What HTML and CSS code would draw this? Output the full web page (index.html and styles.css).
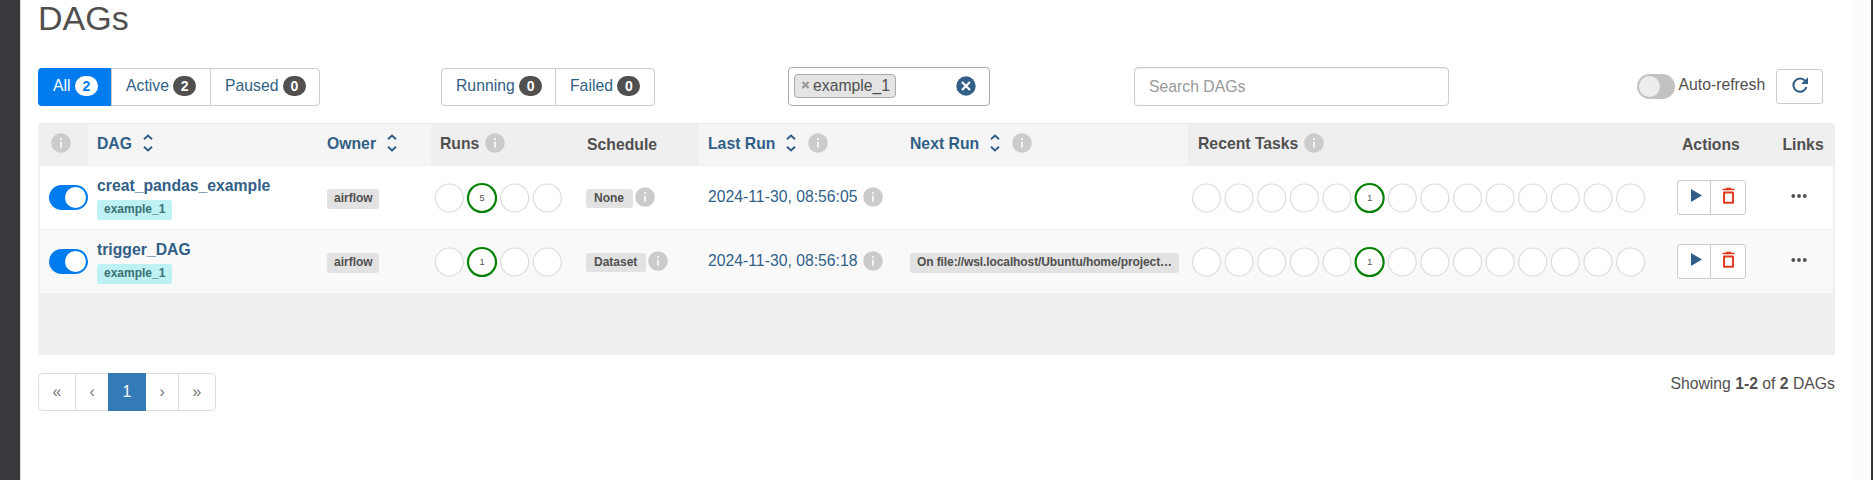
FILE: index.html
```html
<!DOCTYPE html>
<html lang="en">
<head>
<meta charset="utf-8">
<title>DAGs</title>
<link rel="stylesheet" href="styles.css">
</head>
<body>
<svg width="0" height="0" class="defs">
  <defs>
    <symbol id="info" viewBox="0 0 20 20"><circle cx="10" cy="10" r="9.8" fill="#cbcbcb"/><path d="M9 5h2v2H9zM9 8.7h2v6H9z" fill="#f3f3f3"/></symbol>
    <symbol id="sort" viewBox="0 0 10 18"><path d="M1 5.3L5 1.6l4 3.7M1 12.7l4 3.7 4-3.7" fill="none" stroke="#2f5d85" stroke-width="1.9"/></symbol>
    <symbol id="play" viewBox="0 0 11 13"><path d="M0 0l11 6.5L0 13z" fill="#315f87"/></symbol>
    <symbol id="trash" viewBox="0 0 14 18"><path d="M.5 2h13M4 .9h6" fill="none" stroke="#e43921" stroke-width="1.8"/><path d="M2.2 5.3h9.6v10.9H2.2z" fill="none" stroke="#e43921" stroke-width="2.2" stroke-linejoin="round"/></symbol>
    <symbol id="dots" viewBox="0 0 16 4"><g fill="#51504f"><circle cx="2.3" cy="2" r="1.9"/><circle cx="8" cy="2" r="1.9"/><circle cx="13.8" cy="2" r="1.9"/></g></symbol>
    <symbol id="four" viewBox="0 0 131 32"><g fill="#fff" stroke="#dcdcdc" stroke-width="1.2"><circle cx="16.3" cy="16" r="14"/><circle cx="81.7" cy="16" r="14"/><circle cx="114.3" cy="16" r="14"/></g><circle cx="49" cy="16" r="14" fill="#fff" stroke="#058205" stroke-width="2.2"/></symbol>
    <symbol id="fourteen" viewBox="0 0 457 32"><g fill="#fff" stroke="#dcdcdc" stroke-width="1.2"><circle cx="16.5" cy="16" r="14"/><circle cx="49.1" cy="16" r="14"/><circle cx="81.7" cy="16" r="14"/><circle cx="114.4" cy="16" r="14"/><circle cx="147" cy="16" r="14"/><circle cx="212.3" cy="16" r="14"/><circle cx="244.9" cy="16" r="14"/><circle cx="277.5" cy="16" r="14"/><circle cx="310.1" cy="16" r="14"/><circle cx="342.7" cy="16" r="14"/><circle cx="375.3" cy="16" r="14"/><circle cx="408" cy="16" r="14"/><circle cx="440.6" cy="16" r="14"/></g><circle cx="179.6" cy="16" r="14" fill="#fff" stroke="#058205" stroke-width="2.2"/></symbol>
  </defs>
</svg>
<div class="app">
  <div class="side"></div>
  <main class="main">
    <h2 class="title">DAGs</h2>
    <div class="toolbar">
      <div class="group">
        <a class="seg seg-all">All <b class="badge">2</b></a><a class="seg seg-active">Active <b class="badge">2</b></a><a class="seg">Paused <b class="badge">0</b></a>
      </div>
      <div class="group group-state">
        <a class="seg seg-running">Running <b class="badge">0</b></a><a class="seg">Failed <b class="badge">0</b></a>
      </div>
      <div class="select">
        <span class="chip"><svg class="x" viewBox="0 0 8 8"><path d="M1 1l6 6M7 1L1 7" stroke="#999" stroke-width="2.3"/></svg>example_1</span>
        <svg class="clear" viewBox="0 0 20 20"><circle cx="10" cy="10" r="9.7" fill="#315f87"/><path d="M6 6l8 8M14 6l-8 8" stroke="#fff" stroke-width="2.2"/></svg>
      </div>
      <input class="search" placeholder="Search DAGs">
      <span class="toggle off"><i></i></span>
      <span class="auto">Auto-refresh</span>
      <a class="refresh"><svg viewBox="0 0 16 16"><path d="M13.3 4.1A6.6 6.6 0 1 0 14.4 10" fill="none" stroke="#315f87" stroke-width="2.1"/><path d="M16 .2v6.9H9.1z" fill="#315f87"/></svg></a>
    </div>
    <div class="table">
      <div class="row head">
        <div class="plain c-info"><svg class="info"><use href="#info"/></svg></div>
        <div class="link">DAG<svg class="sort"><use href="#sort"/></svg></div>
        <div class="link">Owner<svg class="sort"><use href="#sort"/></svg></div>
        <div class="plain">Runs<svg class="info gap"><use href="#info"/></svg></div>
        <div class="plain low c-sched">Schedule</div>
        <div class="link c-last">Last Run<svg class="sort"><use href="#sort"/></svg><svg class="info far"><use href="#info"/></svg></div>
        <div class="link">Next Run<svg class="sort"><use href="#sort"/></svg><svg class="info far"><use href="#info"/></svg></div>
        <div class="plain c-recent">Recent Tasks<svg class="info gap"><use href="#info"/></svg></div>
        <div class="plain low c-act">Actions</div>
        <div class="plain low c-links">Links</div>
      </div>
      <div class="row">
        <div class="c-toggle"><span class="toggle"><i></i></span></div>
        <div class="c-dag"><a class="name">creat_pandas_example</a><span class="label tag">example_1</span></div>
        <div><span class="label owner">airflow</span></div>
        <div class="c-circ"><svg class="runs"><use href="#four"/><text x="49" y="19">5</text></svg></div>
        <div class="c-label"><span class="label sched">None</span><svg class="info tight"><use href="#info"/></svg></div>
        <div class="c-date">2024-11-30, 08:56:05<svg class="info date"><use href="#info"/></svg></div>
        <div></div>
        <div class="c-circ"><svg class="tasks"><use href="#fourteen"/><text x="179.8" y="19">1</text></svg></div>
        <div class="c-btn"><a class="btn b1"><svg class="play"><use href="#play"/></svg></a><a class="btn b2"><svg class="trash"><use href="#trash"/></svg></a></div>
        <div class="c-dots"><svg class="dots"><use href="#dots"/></svg></div>
      </div>
      <div class="row alt">
        <div class="c-toggle"><span class="toggle"><i></i></span></div>
        <div class="c-dag"><a class="name">trigger_DAG</a><span class="label tag">example_1</span></div>
        <div><span class="label owner">airflow</span></div>
        <div class="c-circ"><svg class="runs"><use href="#four"/><text x="49" y="19">1</text></svg></div>
        <div class="c-label"><span class="label sched">Dataset</span><svg class="info tight"><use href="#info"/></svg></div>
        <div class="c-date">2024-11-30, 08:56:18<svg class="info date"><use href="#info"/></svg></div>
        <div><span class="label next">On file://wsl.localhost/Ubuntu/home/project…</span></div>
        <div class="c-circ"><svg class="tasks"><use href="#fourteen"/><text x="179.8" y="19">1</text></svg></div>
        <div class="c-btn"><a class="btn b1"><svg class="play"><use href="#play"/></svg></a><a class="btn b2"><svg class="trash"><use href="#trash"/></svg></a></div>
        <div class="c-dots"><svg class="dots"><use href="#dots"/></svg></div>
      </div>
    </div>
    <div class="bottom">
      <div class="pages"><a class="p1">«</a><a class="p2">‹</a><a class="p3">1</a><a class="p4">›</a><a class="p5">»</a></div>
      <div class="count">Showing <b>1-2</b> of <b>2</b> DAGs</div>
    </div>
  </main>
  <div class="scroll"></div>
</div>
</body>
</html>
```
FILE: styles.css
```css
* { box-sizing: border-box; }
body { margin: 0; font: 15.75px/22.5px "Liberation Sans", Arial, sans-serif; color: #51504f; background: #fff; overflow: hidden; }
svg { display: block; flex: none; }
.defs { position: absolute; }
.app { display: flex; height: 480px; }
.side { width: 21px; background: #38393d; border-right: 1px solid #dcdcda; }
.main { flex: 1; padding: 0 18px 0 17px; }
.scroll { width: 20px; background: #fcfcfc; border-right: 2px solid #38393d; }
.title { margin: 0; height: 67px; font-size: 34px; font-weight: 400; line-height: 37px; }

.toolbar { display: flex; height: 39px; align-items: flex-start; }
.group { display: flex; height: 38px; margin-top: 1px; width: 282px; border: 1px solid #ccc; border-radius: 4px; }
.group-state { width: 214px; margin-left: 121px; }
.seg { display: flex; padding: 6px 0 0 14px; color: #315f87; white-space: pre; flex: 1; }
.seg + .seg { border-left: 1px solid #ccc; }
.seg-all { flex: none; width: 73px; margin: -1px 0 -1px -1px; padding: 7px 0 0 15px; border-radius: 4px 0 0 4px; background: #017cee; color: #fff; }
.seg-active { flex: none; width: 99px; }
.seg-running { flex: none; width: 113px; }
.badge { width: 23px; height: 20px; margin: 1px 0 0; border-radius: 10px; background: #51504f; color: #fff; font-size: 14px; line-height: 20px; text-align: center; }
.seg-all .badge { background: #fff; color: #017cee; }
.select { display: flex; width: 202px; height: 39px; margin-left: 133px; border: 1px solid #aaa; border-radius: 4px; padding: 6px 13px 0 5px; justify-content: space-between; }
.chip { display: flex; height: 24px; width: 102px; border: 1px solid #aaa; border-radius: 4px; background: #e4e4e4; line-height: 22px; padding-left: 6px; }
.x { width: 9px; height: 8px; margin: 6px 3px 0 0; }
.clear { width: 20px; height: 20px; margin-top: 2px; }
.search { width: 315px; height: 39px; margin-left: 144px; border: 1px solid #ccc; border-radius: 4px; padding: 0 14px; font: inherit; box-shadow: inset 0 1px 1px rgba(0,0,0,.075); }
.search::placeholder { color: #999; }
.toggle { display: block; width: 39px; height: 25px; padding: 2px; border-radius: 13px; background: #017cee; }
.toggle i { display: block; width: 21px; height: 21px; margin-left: 14px; border-radius: 50%; background: #fff; }
.toggle.off { width: 38px; margin: 7px 0 0 188px; background: #c3c2c1; }
.toggle.off i { margin-left: -0.5px; background: #ededed; }
.auto { width: 101px; padding: 7px 0 0 3.5px; white-space: nowrap; }
.refresh { width: 47px; height: 35px; margin-top: 2px; border: 1px solid #ccc; border-radius: 3px; padding: 7px 0 0 15px; }
.refresh svg { width: 16px; height: 16px; }

.table { margin-top: 17px; height: 232px; border: solid #efefef; border-width: 0 2px; border-radius: 4px 4px 0 0; background: #efefef; }
.row { display: grid; grid-template-columns: 48px 230px 113px 146px 121px 203px 287px 478px 107px 60px; height: 64px; background: #fff; border-bottom: 1px solid #efefef; }
.row > div { padding-left: 9px; white-space: nowrap; }
.row.alt { background: #f9f9f9; height: 63px; border: 0; }
.row.head { height: 43px; font-weight: 700; border-top: 1px solid #ebebeb; background: #efefef; }
.head > div { display: flex; padding-top: 8px; line-height: 23.5px; }
.head .link { background: #f5f5f5; color: #315f87; }
.head .low { padding-top: 9px; }
.row .c-info { padding-left: 11px; }
.row .c-last, .row .c-recent { padding-left: 10px; }
.info { width: 20px; height: 20px; margin-top: 1px; }
.info.gap { margin-left: 6px; }
.info.far { margin-left: 12px; }
.info.tight { margin: -2px 0 0 2px; }
.info.date { margin: 0 0 0 6px; }
.sort { width: 10px; height: 18px; margin: 1.5px 0 0 10.5px; }
.row .c-sched { padding-left: 10px; }
.row .c-act { padding-left: 16px; }
.row .c-links { padding-left: 9.5px; }
.c-toggle { padding-top: 19px; }
.c-dag { padding-top: 8px; }
.name { display: block; font-weight: 700; color: #315f87; height: 26px; line-height: 23px; }
.label { display: block; width: max-content; height: 20px; border-radius: 3px; background: #e2e2e2; font-size: 12px; font-weight: 700; line-height: 18px; padding: 0 7px; }
.tag { background: #bdf1f3; color: #3a7173; }
.owner { margin-top: 23px; padding: 0 6px 0 7px; }
.row .c-circ { padding: 16px 0 0 2px; }
.runs { width: 131px; height: 32px; }
.tasks { width: 457px; height: 32px; }
text { font-size: 9px; fill: #51504f; text-anchor: middle; }
.row .c-label { display: flex; padding: 23px 0 0 9px; }
.sched { height: 19px; padding: 0 9px 0 8px; }
.row .c-date { display: flex; padding: 21px 0 0 10px; color: #315f87; line-height: 20px; }
.next { margin-top: 23px; letter-spacing: -0.1px; }
.row .c-btn { display: flex; padding: 14px 0 0 11px; }
.btn { width: 34px; height: 35px; border: 1px solid #ccc; background: #fff; }
.b1 { border-radius: 3px 0 0 3px; padding: 8px 0 0 13px; }
.b2 { width: 36px; margin-left: -1px; border-radius: 0 3px 3px 0; padding: 6px 0 0 11px; }
.play { width: 11px; height: 13px; }
.trash { width: 13px; height: 18px; }
.row .c-dots { padding: 28px 0 0 18px; }
.dots { width: 16px; height: 4px; }
.bottom { display: flex; justify-content: space-between; padding-top: 18px; }
.pages { display: flex; height: 38px; width: 178px; border: 1px solid #ddd; border-radius: 5px; line-height: 35px; text-align: center; color: #777; }
.p1 { width: 37px; border-right: 1px solid #ddd; }
.p2 { width: 32px; }
.p3 { width: 38px; margin: -1px 0; padding-top: 1px; background: #337ab7; color: #fff; }
.p4 { width: 33px; border-right: 1px solid #ddd; }
.p5 { flex: 1; }
.count { line-height: 22px; }
```
